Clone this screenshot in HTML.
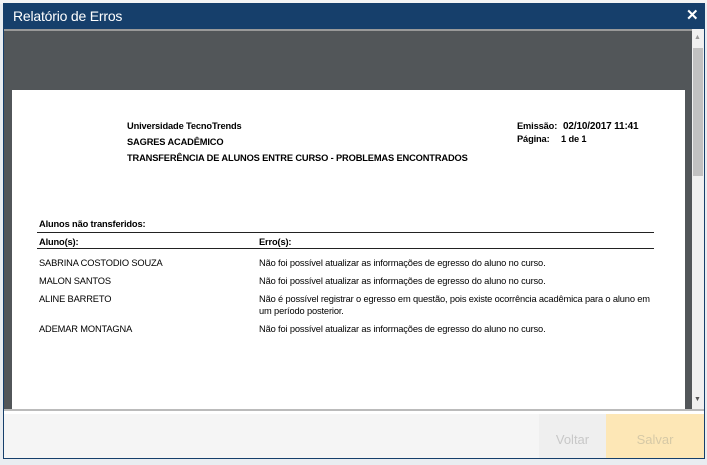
<!DOCTYPE html>
<html><head><style>
*{margin:0;padding:0;box-sizing:border-box}
body{width:707px;height:460px;background:#e9edf1;position:relative;overflow:hidden;font-family:"Liberation Sans",sans-serif}
.a{position:absolute}
.t{font-size:9.3px;color:#000;white-space:nowrap;letter-spacing:-0.15px}
.b{font-weight:bold}
</style></head><body>
<div class="a" style="left:0;top:0;width:707px;height:4px;background:#f4f4f4"></div>
<div class="a" style="left:3px;top:3px;width:702px;height:456px;background:#163f6b"></div>
<div class="a" style="left:13px;top:8px;color:#fff;font-size:14px;letter-spacing:-0.2px">Relatório de Erros</div>
<div class="a" style="left:686px;top:6px;color:#fff;font-size:15px;font-weight:bold">✕</div>
<div class="a" style="left:4px;top:29px;width:700px;height:429px;background:#fff"></div>
<div class="a" style="left:4px;top:29px;width:688px;height:380px;background:#525659;border-top:2px solid #999"></div>
<div class="a" style="left:692px;top:29px;width:12px;height:380px;background:#f0f0f0"></div>
<div class="a" style="left:693px;top:48px;width:10px;height:128px;background:#c1c1c1"></div>
<div class="a" style="left:694px;top:34px;font-size:7px;color:#999">▲</div>
<div class="a" style="left:694px;top:396px;font-size:7px;color:#555">▼</div>
<div class="a" style="left:12px;top:90px;width:673px;height:319px;background:#fff"></div>
<div class="a" style="left:4px;top:409px;width:700px;height:2px;background:#bbb"></div>
<div class="a" style="left:4px;top:411px;width:700px;height:47px;background:#f5f5f5;border-top:3px solid #fff"></div>
<div class="a" style="left:539px;top:414px;width:67px;height:44px;background:#efefef;color:#c8c8c8;font-size:13px;text-align:center;line-height:51px">Voltar</div>
<div class="a" style="left:606px;top:414px;width:98px;height:44px;background:#fde7b6;color:#d6c9a6;font-size:13px;text-align:center;line-height:51px">Salvar</div>
<div class="a" style="left:3px;top:458px;width:702px;height:1px;background:#163f6b"></div>

<div class="a t b" style="left:127px;top:121px">Universidade TecnoTrends</div>
<div class="a t b" style="left:127px;top:137px">SAGRES ACADÊMICO</div>
<div class="a t b" style="left:127px;top:153px">TRANSFERÊNCIA DE ALUNOS ENTRE CURSO - PROBLEMAS ENCONTRADOS</div>
<div class="a t b" style="left:517px;top:121px">Emissão:</div>
<div class="a t b" style="left:563px;top:121px;font-size:10px">02/10/2017 11:41</div>
<div class="a t b" style="left:517px;top:134px">Página:</div>
<div class="a t b" style="left:561px;top:134px">1 de 1</div>
<div class="a t b" style="left:39px;top:219px">Alunos não transferidos:</div>
<div class="a" style="left:37px;top:232px;width:617px;height:1px;background:#222"></div>
<div class="a t b" style="left:39px;top:237px">Aluno(s):</div>
<div class="a t b" style="left:259px;top:237px">Erro(s):</div>
<div class="a" style="left:37px;top:248px;width:617px;height:1px;background:#222"></div>
<div class="a t" style="left:39px;top:258px">SABRINA COSTODIO SOUZA</div>
<div class="a t" style="left:259px;top:258px">Não foi possível atualizar as informações de egresso do aluno no curso.</div>
<div class="a t" style="left:39px;top:276px">MALON SANTOS</div>
<div class="a t" style="left:259px;top:276px">Não foi possível atualizar as informações de egresso do aluno no curso.</div>
<div class="a t" style="left:39px;top:294px">ALINE BARRETO</div>
<div class="a t" style="left:259px;top:294px">Não é possível registrar o egresso em questão, pois existe ocorrência acadêmica para o aluno em</div>
<div class="a t" style="left:259px;top:306px">um período posterior.</div>
<div class="a t" style="left:39px;top:324px">ADEMAR MONTAGNA</div>
<div class="a t" style="left:259px;top:324px">Não foi possível atualizar as informações de egresso do aluno no curso.</div>
</body></html>
